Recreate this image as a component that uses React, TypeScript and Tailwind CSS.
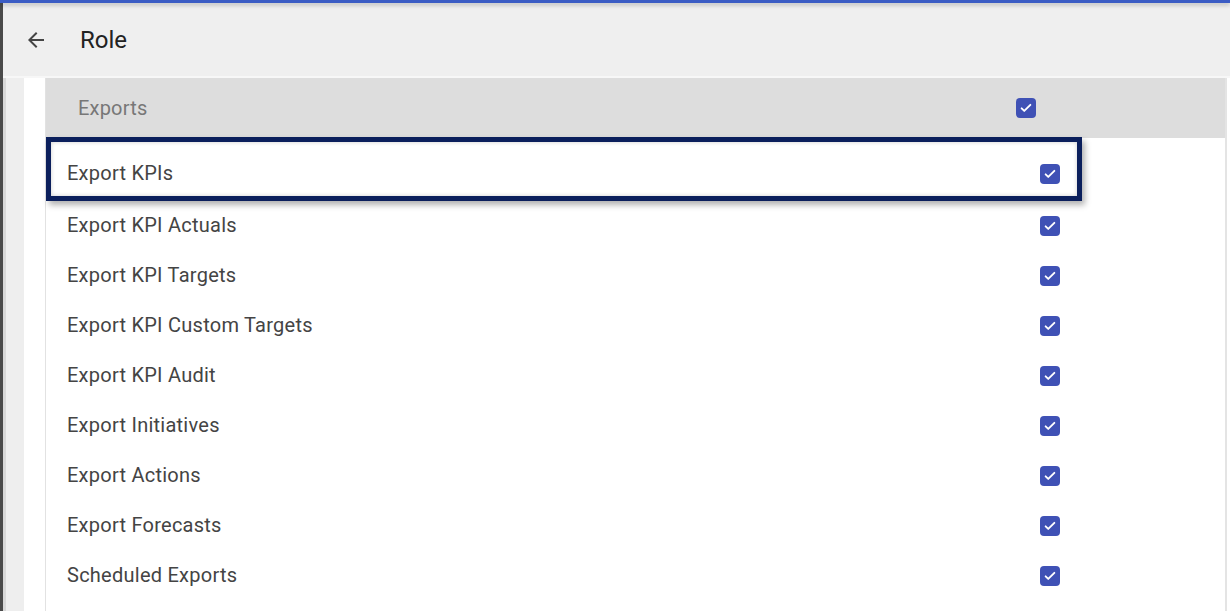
const items = [
  "Export KPI Actuals",
  "Export KPI Targets",
  "Export KPI Custom Targets",
  "Export KPI Audit",
  "Export Initiatives",
  "Export Actions",
  "Export Forecasts",
  "Scheduled Exports",
];

const Checkbox = () => (
  <div className="flex h-[20px] w-[20px] items-center justify-center rounded-[4px] bg-[#3f51b5]">
    <svg width="14" height="14" viewBox="0 0 24 24" fill="none">
      <path
        d="M4.5 12.5l4.5 4.5 10.5-10.5"
        stroke="#fff"
        strokeWidth="3.2"
        strokeLinecap="round"
        strokeLinejoin="round"
      />
    </svg>
  </div>
);

export default function App() {
  return (
    <div className="flex h-[611px] w-[1230px] flex-col overflow-hidden bg-white font-['Roboto',sans-serif]">
      <div className="relative z-10 h-[3px] w-full shrink-0 bg-[#3b5cc4] shadow-[0_2px_4px_rgba(0,0,0,0.25)]" />
      <div className="flex min-h-0 flex-1 border-l-[3px] border-[#4a4a4a]">
        <div className="flex flex-1 flex-col">
          <div className="flex h-[73px] shrink-0 items-center bg-[#efefef]">
            <div className="ml-[21px] flex h-[24px] w-[24px] items-center justify-center">
              <svg width="24" height="24" viewBox="0 0 24 24" fill="#444">
                <path d="M20 11H7.83l5.59-5.59L12 4l-8 8 8 8 1.41-1.41L7.83 13H20v-2z" />
              </svg>
            </div>
            <h1 className="ml-[32px] text-[24px] leading-none text-[#222]">Role</h1>
          </div>
          <div className="h-[2px] shrink-0 bg-[#f7f7f7]" />
          <div className="flex min-h-0 flex-1">
            <div className="w-[21px] shrink-0 border-l-[3px] border-[#d8d8d8] bg-[#eeeeee]" />
            <div className="w-[21px] shrink-0 bg-white" />
            <div className="flex flex-1 flex-col border-l border-[#e2e2e2]">
              <div className="flex h-[60px] shrink-0 items-center justify-between bg-[#dddddd] pl-[32px] pr-[189px]">
                <span className="text-[20px] tracking-[0.2px] text-[#777]">Exports</span>
                <Checkbox />
              </div>
              <div className="-mt-px flex h-[64px] w-[1036px] shrink-0 items-center justify-between border-[5px] border-[#0b1f5c] bg-white pl-[16px] pr-[17px] pt-[10px] shadow-[3px_4px_6px_rgba(0,0,0,0.3),inset_0_0_4px_rgba(0,0,0,0.2)]">
                <span className="pb-[2px] text-[20px] leading-none tracking-[0.25px] text-[#444]">Export KPIs</span>
                <Checkbox />
              </div>
              {items.map((item) => (
                <div
                  key={item}
                  className="flex h-[50px] w-[1036px] shrink-0 items-center justify-between pl-[21px] pr-[22px] first:-mt-[2px]"
                >
                  <span className="pb-[3px] text-[20px] leading-none tracking-[0.25px] text-[#444]">{item}</span>
                  <Checkbox />
                </div>
              ))}
            </div>
            <div className="w-[2px] shrink-0 bg-[#e4e4e4]" />
            <div className="w-[3px] shrink-0 bg-white" />
          </div>
        </div>
      </div>
    </div>
  );
}
